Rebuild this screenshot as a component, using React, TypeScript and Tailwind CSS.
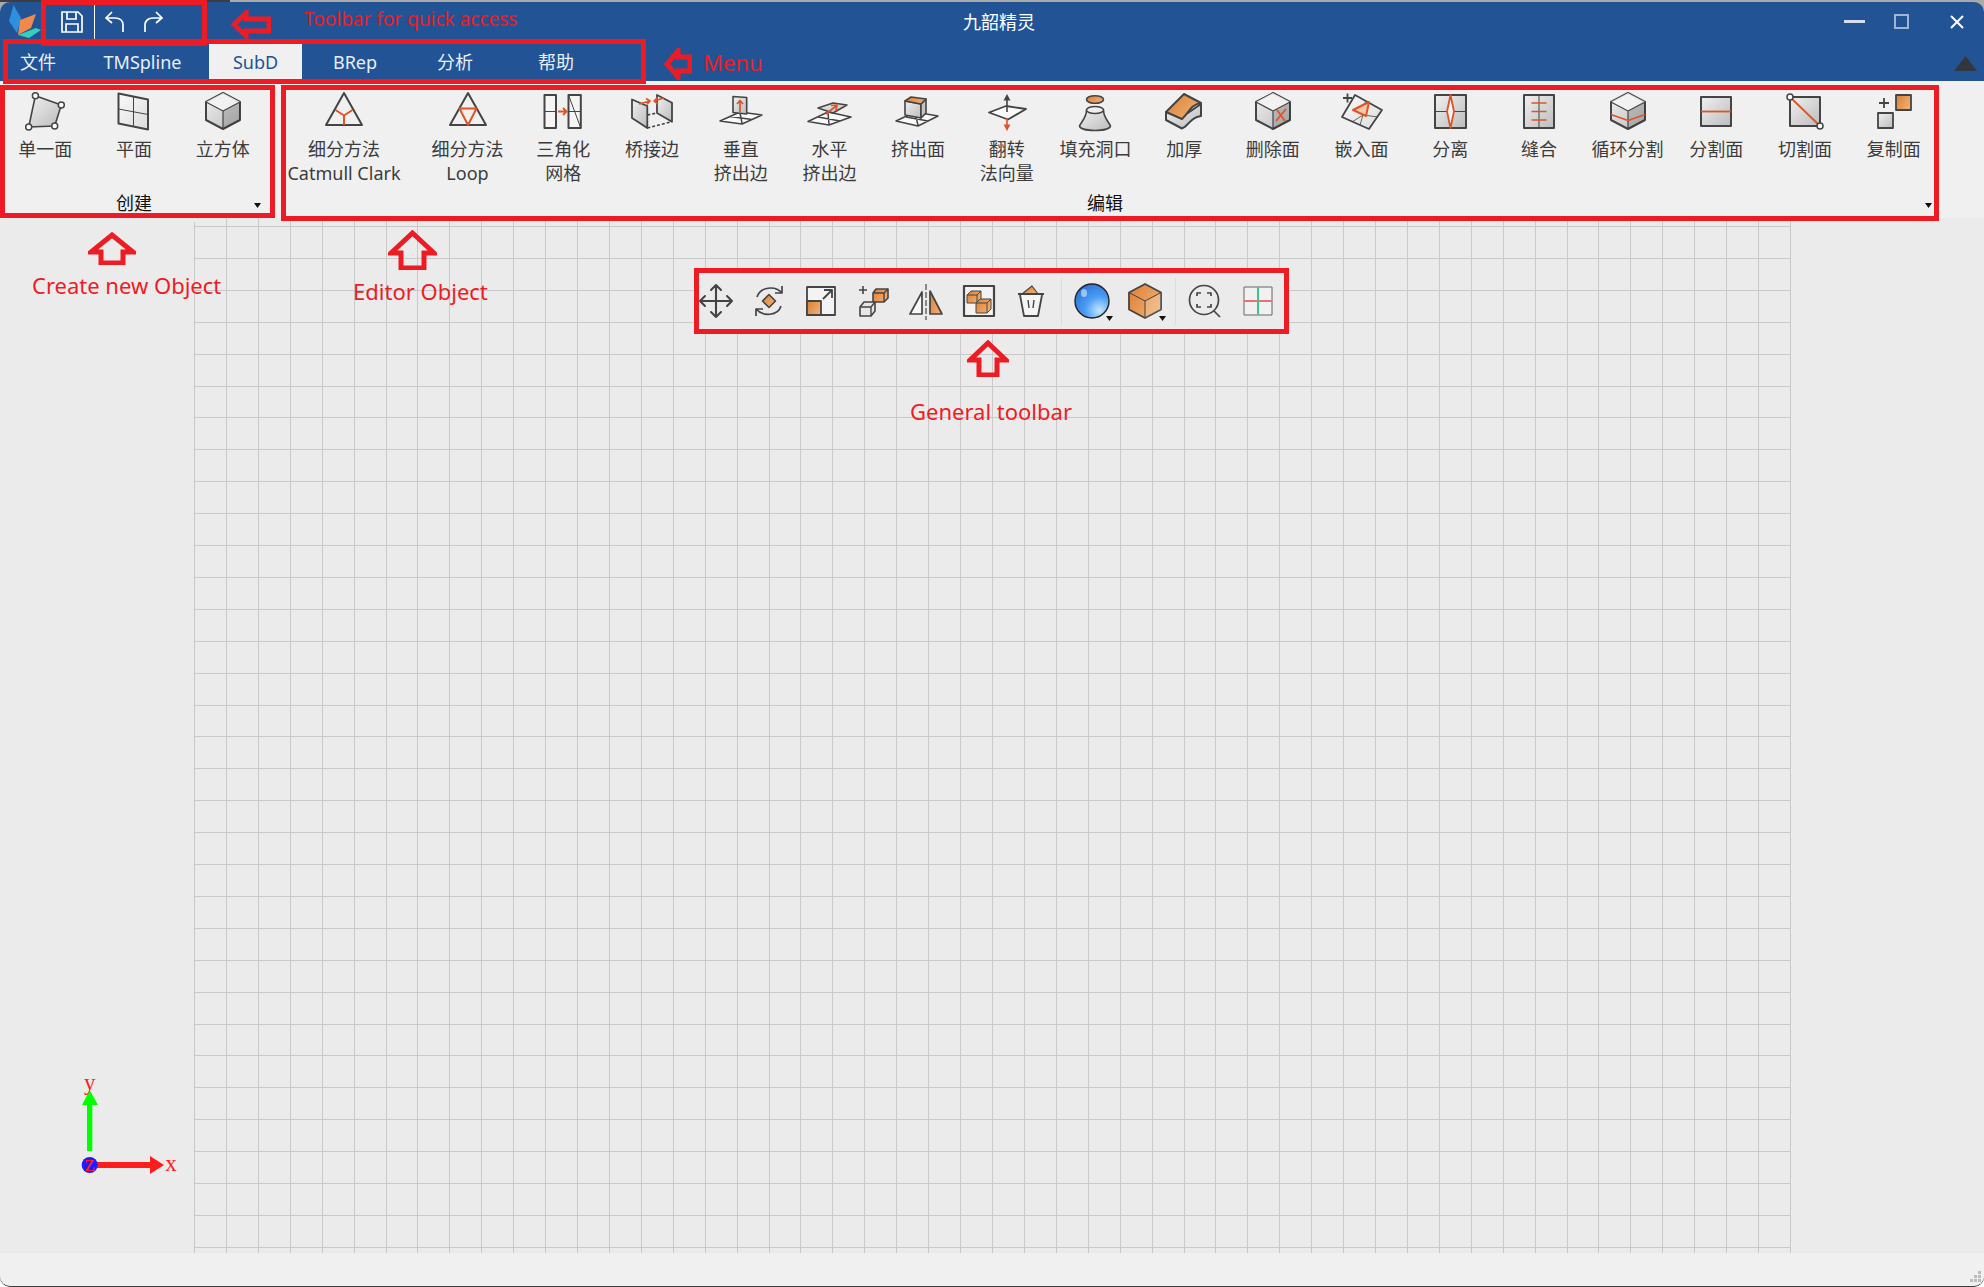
import { ReactNode } from "react";

const DARK = "#444444";
const RED = "#dc5427";

const Ico = ({ children, box = 44 }: { children: ReactNode; box?: number }) => (
  <svg width={box} height={box} viewBox={`0 0 ${box} ${box}`} fill="none" stroke={DARK} strokeWidth="1.6" strokeLinejoin="round" className="overflow-visible">
    {children}
  </svg>
);

const Cube = ({ cx = 22, top = 3, w = 17, h = 36, face = "url(#gray)" }: { cx?: number; top?: number; w?: number; h?: number; face?: string }) => {
  const s = h / 4;
  return (
    <>
      <path d={`M${cx} ${top} L${cx + w} ${top + s} V${top + 3 * s} L${cx} ${top + h} L${cx - w} ${top + 3 * s} V${top + s} Z`} fill={face} strokeWidth="2" />
      <path d={`M${cx} ${top} L${cx + w} ${top + s} L${cx} ${top + 2 * s} L${cx - w} ${top + s} Z`} fill="#f4f4f4" stroke="none" opacity="0.9" />
      <path d={`M${cx} ${top + 2 * s} L${cx + w} ${top + s} V${top + 3 * s} L${cx} ${top + h} Z`} fill="#000" opacity="0.14" stroke="none" />
      <path d={`M${cx - w} ${top + s} L${cx} ${top + 2 * s} L${cx + w} ${top + s} M${cx} ${top + 2 * s} V${top + h}`} strokeWidth="1.2" />
    </>
  );
};

const Floor = ({ d = "M1 31 L21 22 L43 25 L23 34 Z M11 26.5 L33 29.5 M21 23 L23 33" }: { d?: string }) => (
  <path d={d} fill="#fafafa" strokeWidth="1.5" />
);

const Dot = ({ x, y, r = 3 }: { x: number; y: number; r?: number }) => <circle cx={x} cy={y} r={r} fill="#fff" strokeWidth="1.5" />;

const createItems: { label: string; icon: ReactNode }[] = [
  {
    label: "单一面",
    icon: (
      <Ico>
        <path d="M12.4 5.7 L38.3 15 L31.7 36 L5.7 37 Z" fill="url(#gray)" />
        <Dot x={12.4} y={5.7} />
        <Dot x={38.3} y={15} />
        <Dot x={31.7} y={36} />
        <Dot x={5.7} y={37} />
      </Ico>
    ),
  },
  {
    label: "平面",
    icon: (
      <Ico>
        <path d="M6.5 3.5 L36 9.5 V39.5 L6.5 33.5 Z" fill="url(#light)" strokeWidth="2" />
        <path d="M6.5 19 L36 24.5 M21.5 6.5 V36.5" strokeWidth="1" />
      </Ico>
    ),
  },
  { label: "立方体", icon: <Ico><Cube /></Ico> },
];

const editItems: { label: string; cls?: string; icon: ReactNode }[] = [
  {
    label: "细分方法\nCatmull Clark",
    cls: "w-[126px]",
    icon: (
      <Ico>
        <path d="M22 3 L40 35 H4 Z" strokeWidth="2" />
        <path d="M13.5 20 L22 25.5 L30.5 20 M22 25.5 V35" stroke={RED} strokeWidth="2" />
      </Ico>
    ),
  },
  {
    label: "细分方法\nLoop",
    cls: "w-[103px] ml-[9px]",
    icon: (
      <Ico>
        <path d="M22 3 L40 35 H4 Z" strokeWidth="2" />
        <path d="M13.5 18.5 H30.5 L22 35 Z" stroke={RED} strokeWidth="2" />
      </Ico>
    ),
  },
  {
    label: "三角化\n网格",
    icon: (
      <Ico>
        <path d="M3.5 5 H15 V38 H3.5 Z M27.5 5 H39.8 V38 H27.5 Z" fill="#f5f5f5" strokeWidth="2" />
        <path d="M3.5 21.5 H15 M27.5 21.5 H39.8 M27.5 5 L39.8 38" strokeWidth="1" />
        <path d="M17 21.5 H25 M22 18 L25.5 21.5 L22 25" stroke={RED} strokeWidth="1.8" />
      </Ico>
    ),
  },
  {
    label: "桥接边",
    icon: (
      <Ico>
        <path d="M2 9.5 L17.3 16 V38 L2 28 Z" fill="url(#gray)" strokeWidth="1.8" />
        <path d="M27 5 L42 12.7 V31.7 L27 23 Z" fill="url(#gray)" strokeWidth="1.8" />
        <path d="M17.3 38 L42 31.7 M17.3 25 L27 23" strokeWidth="1.6" strokeDasharray="3 2" />
        <path d="M9 14 L20 11 M16 8.5 L20 11 L17 14.5 M34 8 L24 11 M27.5 7.5 L24 11 L28 14" stroke={RED} strokeWidth="1.6" />
      </Ico>
    ),
  },
  {
    label: "垂直\n挤出边",
    icon: (
      <Ico>
        <Floor />
        <path d="M14 6.5 L27.7 7.5 V24 L14 22.5 Z" fill="url(#gray)" strokeWidth="1.6" />
        <path d="M21 22 V11 M18 14 L21 10.5 L24 14" stroke={RED} strokeWidth="1.7" />
      </Ico>
    ),
  },
  {
    label: "水平\n挤出边",
    icon: (
      <Ico>
        <path d="M1 31.5 L21 22 L44 27 L22 35 Z M11 27 L33 31 M21 23 L22 34" fill="#fafafa" strokeWidth="1.5" />
        <path d="M11 18 L26 13 L40 15 L26 23 Z" fill="url(#gray)" strokeWidth="1.5" />
        <path d="M19 24 L29 16 M24 15.5 L30 15 L29 20.5" stroke={RED} strokeWidth="1.7" />
      </Ico>
    ),
  },
  {
    label: "挤出面",
    icon: (
      <Ico>
        <Floor d="M0 31 L19 22 L42 26 L22 36 Z M10 27 L32 31 M19 23 L22 35" />
        <path d="M9 11 V25 L25 28 V14 Z" fill="url(#gray)" />
        <path d="M25 14 L30 9 V23 L25 28 Z" fill="#c4c4c4" />
        <path d="M9 11 L15 7 L30 9 L25 14 Z" fill="url(#orange)" />
      </Ico>
    ),
  },
  {
    label: "翻转\n法向量",
    icon: (
      <Ico>
        <path d="M4 22.5 L21 16 L41 19 L23 29.5 Z" fill="#fafafa" strokeWidth="1.8" />
        <path d="M22 22 V6" strokeWidth="1.6" />
        <path d="M22 4 L25.5 10.5 H18.5 Z" fill={DARK} stroke="none" />
        <path d="M22 28 V38" stroke={RED} strokeWidth="1.6" />
        <path d="M22 41 L25.5 34.5 H18.5 Z" fill={RED} stroke="none" />
      </Ico>
    ),
  },
  {
    label: "填充洞口",
    icon: (
      <Ico>
        <ellipse cx="22" cy="9.5" rx="8.5" ry="3.8" fill="url(#orange)" />
        <path d="M13.5 20 C13.5 28 8 32 6.5 36 C8 42 36 42 37.5 36 C36 32 30.5 28 30.5 20 Z" fill="url(#gray)" />
        <ellipse cx="22" cy="20" rx="8.5" ry="3.5" fill="#eeeeee" />
      </Ico>
    ),
  },
  {
    label: "加厚",
    icon: (
      <Ico>
        <path d="M4 22 V30 L20 38.5 C27 36 28 27 39 26 V14 L20 27 Z" fill="url(#gray)" strokeWidth="2" />
        <path d="M4 22 L22 4 L39 13 C30 14 27 22 20 29 Z" fill="url(#orange)" strokeWidth="2" />
      </Ico>
    ),
  },
  {
    label: "删除面",
    icon: (
      <Ico>
        <Cube />
        <path d="M25 31 L35 19 M26 20 L34 31" stroke={RED} strokeWidth="1.8" />
      </Ico>
    ),
  },
  {
    label: "嵌入面",
    icon: (
      <Ico>
        <path d="M2 27 L15 5 L42 20 L29 39 Z" fill="url(#light)" strokeWidth="1.8" />
        <path d="M12 32 L23 25 L38 27 M23 25 L20 35 M23 25 L25 12" strokeWidth="0.8" />
        <path d="M13 20 L29 12 L26 26 Z" fill="#f7c8a8" stroke={RED} strokeWidth="2" />
        <path d="M3 8 H12 M7.5 3.5 V12.5" strokeWidth="1.8" />
      </Ico>
    ),
  },
  {
    label: "分离",
    icon: (
      <Ico>
        <path d="M7 5 H38 V38 H7 Z" fill="url(#gray)" strokeWidth="2" />
        <path d="M7 21.5 H38 M22.5 5 V38" strokeWidth="1" />
        <path d="M22.5 5 L26 21.5 L22.5 38 L19 21.5 Z" fill="#f5f5f5" stroke={RED} strokeWidth="1.8" />
      </Ico>
    ),
  },
  {
    label: "缝合",
    icon: (
      <Ico>
        <path d="M7 5 H37 V38 H7 Z" fill="url(#gray)" strokeWidth="2" />
        <path d="M22 5 V38" strokeWidth="1" />
        <path d="M14.5 13 H29.5 M14.5 21.5 H29.5 M14.5 30 H29.5" stroke={RED} strokeWidth="1.6" />
      </Ico>
    ),
  },
  {
    label: "循环分割",
    icon: (
      <Ico>
        <Cube />
        <path d="M5 24.5 L22 30.5 L39 24.5" stroke={RED} strokeWidth="1.6" />
      </Ico>
    ),
  },
  {
    label: "分割面",
    icon: (
      <Ico>
        <path d="M7 7 H37 V36 H7 Z" fill="url(#gray)" strokeWidth="2" />
        <path d="M7 21.5 H37" stroke={RED} strokeWidth="1.8" />
      </Ico>
    ),
  },
  {
    label: "切割面",
    icon: (
      <Ico>
        <path d="M7 7 H37 V36 H7 Z" fill="url(#gray)" strokeWidth="2" />
        <path d="M7 7 L37 36" stroke={RED} strokeWidth="1.8" />
        <Dot x={7} y={7} />
        <Dot x={37} y={36} />
      </Ico>
    ),
  },
  {
    label: "复制面",
    icon: (
      <Ico>
        <path d="M7 13 H17 M12 8 V18" strokeWidth="1.8" />
        <path d="M24 5 H39 V20 H24 Z" fill="url(#orange)" strokeWidth="1.8" />
        <path d="M6 23 H21 V38 H6 Z" fill="url(#gray)" strokeWidth="1.8" />
      </Ico>
    ),
  },
];

const RibbonItem = ({ label, icon, cls = "w-[88.7px]" }: { label: string; icon: ReactNode; cls?: string }) => (
  <div className={`flex shrink-0 flex-col items-center pt-[9px] ${cls}`}>
    <div className="size-[44px]">{icon}</div>
    <div className="mt-[3px] whitespace-pre text-center text-[18px] leading-[24px] text-[#3c3c3c]">{label}</div>
  </div>
);

const DropMark = ({ className = "" }: { className?: string }) => (
  <svg width="7" height="5" viewBox="0 0 7 5" className={className}>
    <path d="M0 0 H7 L3.5 5 Z" fill="#111" />
  </svg>
);

const GeneralIcons1: ReactNode[] = [
  <Ico box={34}>
    <path d="M17 1 V33 M1 17 H33 M12 6 L17 1 L22 6 M12 28 L17 33 L22 28 M6 12 L1 17 L6 22 M28 12 L33 17 L28 22" strokeWidth="2.1" strokeLinecap="round" />
  </Ico>,
  <Ico box={34}>
    <path d="M5 13 C8 3 23 1 30 9 M30 2 V9 H23 M29 22 C26 32 11 33 4 25 M4 32 V25 H11" strokeWidth="1.7" />
    <path d="M17 10.5 L23.5 17 L17 23.5 L10.5 17 Z" fill="url(#orange)" strokeWidth="1.6" />
  </Ico>,
  <Ico box={34}>
    <path d="M3 3 H31 V31 H3 Z" fill="#f3f3f3" strokeWidth="1.8" />
    <path d="M3 17 H17 V31 H3 Z" fill="url(#orange)" strokeWidth="1.8" />
    <path d="M19 15 L28 6 M20 6 H28 V14" strokeWidth="1.8" />
  </Ico>,
  <Ico box={34}>
    <path d="M2 6 H10 M6 2 V10" strokeWidth="1.6" />
    <path d="M16 9 L19 5 H31 V14 L27 18 H16 Z" fill="url(#orange)" strokeWidth="1.6" />
    <path d="M16 9 H27 V18 M27 9 L31 5" strokeWidth="1.4" />
    <path d="M3 23 L7 18 H18 V27 L14 32 H3 Z" fill="#e6e6e6" strokeWidth="1.6" />
    <path d="M3 23 H14 V32 M14 23 L18 18" strokeWidth="1.4" />
  </Ico>,
  <Ico box={34}>
    <path d="M1 30 L13 8 V30 Z" fill="#f8f8f8" strokeWidth="1.7" />
    <path d="M21 7 L33 30 H21 Z" fill="url(#orange)" strokeWidth="1.7" />
    <path d="M17 0 V36" strokeWidth="1.7" strokeDasharray="6 2" stroke="#777" />
  </Ico>,
  <Ico box={34}>
    <path d="M2 2 H32 V32 H2 Z" fill="#f3f3f3" strokeWidth="2.2" />
    <path d="M5 11 L9 7 H19 V16 L15 19 H5 Z" fill="url(#orange)" strokeWidth="1" />
    <path d="M5 11 H15 V19 M15 11 L19 7" strokeWidth="1" />
    <path d="M14 19 L18 15 H29 V25 L25 29 H14 Z" fill="url(#orange)" strokeWidth="1" />
    <path d="M14 19 H25 V29 M25 19 L29 15" strokeWidth="1" />
  </Ico>,
  <Ico box={34}>
    <path d="M8 10 L18 2 L24 10 Z" fill="url(#orange)" strokeWidth="1.2" />
    <path d="M4 10 H30 M6 11 L10 32 H24 L28 11" strokeWidth="1.8" fill="#f5f5f5" />
    <path d="M14 16 L15 24 M20 16 L19 24" strokeWidth="1.4" />
  </Ico>,
];

const GeneralIcons2: ReactNode[] = [
  <Ico box={34}>
    <ellipse cx="17" cy="17" rx="17" ry="17" fill="url(#ball)" strokeWidth="1.4" stroke="#222" />
    <ellipse cx="9" cy="9" rx="3" ry="4" fill="#fff" opacity="0.5" stroke="none" />
  </Ico>,
  <Ico box={34}>
    <path d="M17 0 L33 8.5 V25.5 L17 34 L1 25.5 V8.5 Z" fill="url(#orange)" strokeWidth="1.8" />
    <path d="M17 17 L33 8.5 V25.5 L17 34 Z" fill="#fff" opacity="0.18" stroke="none" />
    <path d="M1 8.5 L17 17 L33 8.5 M17 17 V34" strokeWidth="1" />
  </Ico>,
];

const GeneralIcons3: ReactNode[] = [
  <Ico box={34}>
    <ellipse cx="15" cy="16" rx="14.5" ry="14.5" strokeWidth="1.7" />
    <path d="M25 27 L31 33" strokeWidth="1.7" />
    <path d="M8 12 V9 H12 M18 9 H22 V12 M22 20 V23 H18 M12 23 H8 V20" strokeWidth="1.7" />
  </Ico>,
  <Ico box={34}>
    <path d="M3 3 H31 V31 H3 Z" fill="#f1f1f1" stroke="#666" strokeWidth="1" />
    <path d="M3 17 H31" stroke="#ee6f6f" strokeWidth="2" />
    <path d="M17 3 V31" stroke="#3fc48f" strokeWidth="2" />
  </Ico>,
];

const Box = ({ cls }: { cls: string }) => <div className={`absolute border-[5px] border-[#ed1c24] ${cls}`} />;

const Arrow = ({ d, cls, w, h }: { d: string; cls: string; w: number; h: number }) => (
  <svg width={w} height={h} viewBox={`0 0 ${w} ${h}`} className={`absolute ${cls}`}>
    <path d={d} fill="none" stroke="#ed1c24" strokeWidth="5" strokeLinejoin="miter" />
  </svg>
);

const Note = ({ text, cls }: { text: string; cls: string }) => (
  <div className={`absolute whitespace-nowrap leading-[28px] text-[#ed1c24] ${cls}`}>{text}</div>
);

const tabs = [
  { name: "文件", w: "w-[76px]" },
  { name: "TMSpline", w: "w-[133px]" },
  { name: "SubD", w: "w-[93px]", active: true },
  { name: "BRep", w: "w-[106px]" },
  { name: "分析", w: "w-[94px]" },
  { name: "帮助", w: "w-[108px]" },
];

const gridXs = Array.from({ length: 51 }, (_, i) => Math.round(i * 31.92) + 0.5);
const gridYs = Array.from({ length: 33 }, (_, i) => Math.round(8 + i * 31.9) + 0.5);

const App = () => {
  return (
    <div className="relative flex h-[1287px] w-[1984px] flex-col overflow-hidden bg-white font-['Noto_Sans','Noto_Sans_CJK_SC',sans-serif]">
      <svg className="absolute size-0">
        <defs>
          <linearGradient id="gray" x1="0" y1="0" x2="1" y2="1">
            <stop offset="0" stopColor="#f0f0f0" />
            <stop offset="1" stopColor="#bcbcbc" />
          </linearGradient>
          <linearGradient id="light" x1="0" y1="0" x2="1" y2="1">
            <stop offset="0" stopColor="#fafafa" />
            <stop offset="1" stopColor="#dcdcdc" />
          </linearGradient>
          <linearGradient id="orange" x1="0" y1="0" x2="1" y2="0.6">
            <stop offset="0" stopColor="#dc7f33" />
            <stop offset="1" stopColor="#f0ad70" />
          </linearGradient>
          <radialGradient id="ball" cx="0.72" cy="0.78" r="0.85">
            <stop offset="0" stopColor="#c4e6ff" />
            <stop offset="0.5" stopColor="#4a9cf5" />
            <stop offset="1" stopColor="#2c76d8" />
          </radialGradient>
        </defs>
      </svg>

      {/* window edge behind the title bar */}
      <div className="flex h-[2px] shrink-0">
        <div className="w-[230px] bg-[#3d3d3d]" />
        <div className="flex-1 bg-[#a9a9a9]" />
      </div>

      {/* title bar + tabs */}
      <div className="shrink-0 bg-[#a9a9a9]">
        <div className="rounded-t-[10px] bg-[#225495]">
          <div className="flex h-[42px] items-center pb-[3px]">
            <div className="flex w-[168px] shrink-0 items-center">
              <svg width="33" height="34" viewBox="0 0 33 34" className="ml-[8px]">
                <path d="M5.5 0 L13 13 L9 28 L1 16 Z" fill="#2e8ee0" />
                <path d="M12 15 L28 9 L23 23 L10 30 Z" fill="#f0894a" />
                <path d="M10 30 L28 23 L33 25 L21 33 Z" fill="#33d1bd" />
              </svg>
              <svg width="22" height="22" viewBox="0 0 22 22" fill="none" stroke="#fff" strokeWidth="1.7" className="ml-[20px]">
                <path d="M1 1 H17 L21 5 V21 H1 Z M6 1 V8 H15 V1 M5 21 V13 H17 V21" />
              </svg>
              <div className="ml-[11px] h-[34px] w-px bg-white" />
              <svg width="19" height="22" viewBox="0 0 19 22" fill="none" stroke="#fff" strokeWidth="1.7" className="ml-[10px]">
                <path d="M7 1 L1 7 L7 12 M1 7 H10 C15 7 18 10 18 14 V21" />
              </svg>
              <svg width="19" height="22" viewBox="0 0 19 22" fill="none" stroke="#fff" strokeWidth="1.7" className="ml-[20px]">
                <path d="M12 1 L18 7 L12 12 M18 7 H9 C4 7 1 10 1 14 V21" />
              </svg>
            </div>
            <div className="flex-1 text-center text-[18px] leading-[24px] text-white">九韶精灵</div>
            <div className="flex w-[154px] shrink-0 items-center pl-[14px]">
              <div className="h-[3px] w-[21px] bg-[#d5deea]" />
              <div className="ml-[29px] size-[15px] border-2 border-[#9fb5d2]" />
              <svg width="14" height="14" viewBox="0 0 14 14" className="ml-[41px]">
                <path d="M1 1 L13 13 M13 1 L1 13" stroke="#fff" strokeWidth="2" />
              </svg>
            </div>
          </div>
          <div className="flex h-[37px] items-center">
            {tabs.map((t) => (
              <div
                key={t.name}
                className={`flex h-full items-center justify-center text-[18px] ${t.w} ${t.active ? "bg-[#f0f0f0] text-[#225495]" : "text-[#e9eff7]"}`}
              >
                {t.name}
              </div>
            ))}
            <svg width="23" height="15" viewBox="0 0 23 15" className="ml-auto mr-[7px] mt-[2px]">
              <path d="M11.5 0 L23 15 H0 Z" fill="#33363d" />
            </svg>
          </div>
        </div>
      </div>

      {/* ribbon */}
      <div className="flex h-[137px] shrink-0 bg-[#f0f0f0]">
        <div className="relative ml-px flex w-[266px] shrink-0 flex-col">
          <div className="flex flex-1">
            {createItems.map((it) => (
              <RibbonItem key={it.label} {...it} />
            ))}
          </div>
          <div className="pb-[3px] text-center text-[18px] leading-[24px] text-[#111]">创建</div>
          <DropMark className="absolute bottom-[10px] right-[6px]" />
        </div>
        <div className="relative ml-[14px] flex w-[1657px] shrink-0 flex-col">
          <div className="flex flex-1">
            {editItems.map((it) => (
              <RibbonItem key={it.label} {...it} />
            ))}
          </div>
          <div className="pb-[3px] pr-[9px] text-center text-[18px] leading-[24px] text-[#111]">编辑</div>
          <DropMark className="absolute bottom-[10px] right-[6px]" />
        </div>
      </div>

      {/* canvas */}
      <div className="relative min-h-0 flex-1 bg-[#ebebeb]">
        <svg className="ml-[194px] block h-full w-[1597px]" shapeRendering="crispEdges">
          <path
            d={gridXs.map((x, i) => `M${x} ${i === 0 ? 4 : 0} V1035`).join(" ") + " " + gridYs.map((y) => `M0 ${y} H1597`).join(" ")}
            stroke="#c9c9c9"
            strokeWidth="1"
            fill="none"
          />
        </svg>

        {/* general toolbar */}
        <div className="absolute left-[694px] top-[50px] flex h-[66px] w-[595px] items-center bg-[#ebebeb] pl-[5px]">
          <div className="flex gap-[18.5px]">
            {GeneralIcons1.map((ic, i) => (
              <div key={i} className="size-[34px]">{ic}</div>
            ))}
          </div>
          <div className="mx-[13px] h-[47px] w-px bg-[#dcdcdc]" />
          <div className="flex gap-[18.5px]">
            {GeneralIcons2.map((ic, i) => (
              <div key={i} className="relative size-[34px]">
                {ic}
                <DropMark className="absolute left-[31px] top-[32px]" />
              </div>
            ))}
          </div>
          <div className="mx-[13px] h-[47px] w-px bg-[#dcdcdc]" />
          <div className="flex gap-[18.5px]">
            {GeneralIcons3.map((ic, i) => (
              <div key={i} className="size-[34px]">{ic}</div>
            ))}
          </div>
        </div>

        {/* axis gizmo */}
        <svg width="100" height="120" viewBox="0 0 100 120" className="absolute left-[80px] top-[840px]">
          <path d="M7 93 V47 H2 L9.7 32 L18 47 H12.3 V93 Z" fill="#00ff00" />
          <path d="M17 104 H70 V98 L84 107 L70 116 V110 H17 Z" fill="#ff1c1c" />
          <circle cx="9.7" cy="107" r="8" fill="#1c1cff" />
          <text x="9.7" y="32" textAnchor="middle" fontFamily="Liberation Serif, serif" fontSize="23" fill="#ff1c1c">y</text>
          <text x="91" y="113" textAnchor="middle" fontFamily="Liberation Serif, serif" fontSize="23" fill="#ff1c1c">x</text>
          <text x="9.7" y="113" textAnchor="middle" fontFamily="Liberation Serif, serif" fontSize="23" fill="#ff1c1c">z</text>
        </svg>
      </div>

      {/* status bar */}
      <div className="relative h-[34px] shrink-0 rounded-b-[10px] border-b border-[#3d3d3d] bg-[#f0f0f0]">
        <svg width="14" height="14" viewBox="0 0 14 14" className="absolute bottom-[1px] right-[1px]" fill="#bbbbbb">
          <path d="M9 0 h3 v3 h-3 Z M5 4 h3 v3 h-3 Z M9 4 h3 v3 h-3 Z M1 8 h3 v3 h-3 Z M5 8 h3 v3 h-3 Z M9 8 h3 v3 h-3 Z" />
        </svg>
      </div>

      {/* red annotations on top of the screenshot */}
      <Box cls="left-[41px] top-0 h-[46px] w-[166px]" />
      <Box cls="left-[3px] top-[39px] h-[45px] w-[643px]" />
      <Box cls="left-0 top-[85px] h-[133px] w-[275px]" />
      <Box cls="left-[281px] top-[85px] h-[136px] w-[1658px]" />
      <Box cls="left-[694px] top-[268px] h-[66px] w-[595px]" />

      <Arrow w={40} h={29} cls="left-[231px] top-[10px]" d="M3 14.5 L15 3 V9 H38 V21 H15 V26 Z" />
      <Arrow w={28} h={32} cls="left-[664px] top-[48px]" d="M3 16 L14 3 V9 H26 V23 H14 V29 Z" />
      <Arrow w={48} h={33} cls="left-[88px] top-[232px]" d="M24 3 L45 20 H35 V31 H13 V20 H3 Z" />
      <Arrow w={49} h={40} cls="left-[388px] top-[230px]" d="M24.5 3 L46 23 H36 V38 H13 V23 H3 Z" />
      <Arrow w={42} h={37} cls="left-[967px] top-[340px]" d="M21 3 L39 20 H30 V35 H12 V20 H3 Z" />

      <Note text="Toolbar for quick access" cls="left-[304px] top-[5px] text-[19px]" />
      <Note text="Menu" cls="left-[703px] top-[48px] text-[22px]" />
      <Note text="Create new Object" cls="left-[32px] top-[271px] text-[22px]" />
      <Note text="Editor Object" cls="left-[353px] top-[277px] text-[22px]" />
      <Note text="General toolbar" cls="left-[910px] top-[397px] text-[22px]" />
    </div>
  );
};

export default App;
